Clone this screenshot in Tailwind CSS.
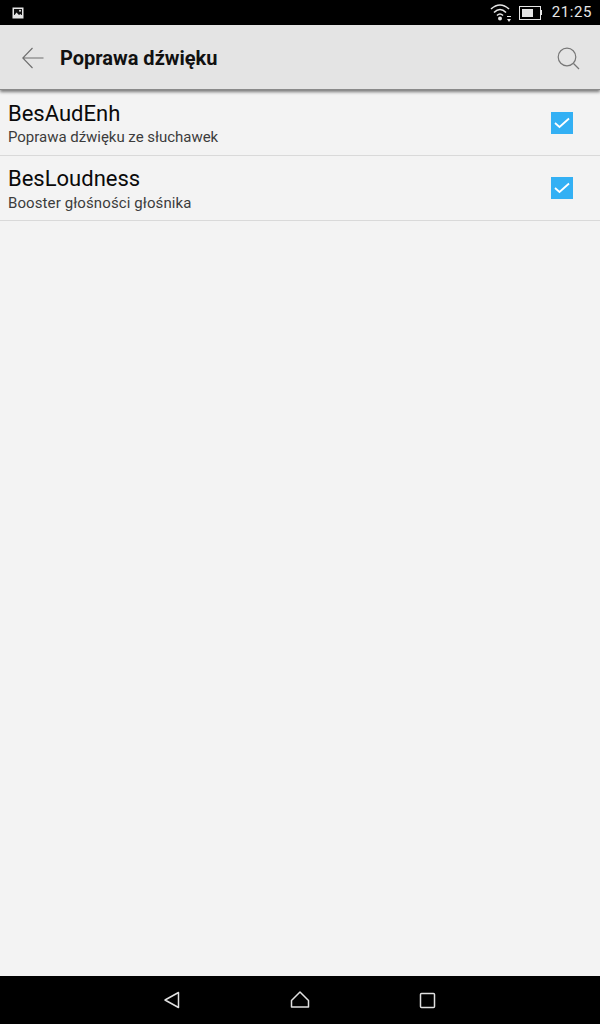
<!DOCTYPE html>
<html lang="pl">
  <head>
    <meta charset="UTF-8" />
    <meta name="viewport" content="width=device-width, initial-scale=1.0" />
    <title>Poprawa dźwięku</title>
    <script src="https://cdn.jsdelivr.net/npm/@tailwindcss/browser@4"></script>
  </head>
  <body class="bg-[#f3f3f3] font-['Roboto',sans-serif]">
    <div class="flex flex-col w-[600px] h-[1024px] overflow-hidden">
      <!-- Status bar -->
      <div class="flex items-center h-[25px] bg-black text-[#e6e6e6] shrink-0">
        <svg class="ml-3 w-3 h-3" viewBox="0 0 12 12">
          <rect x="0.5" y="0.5" width="11" height="11" fill="#e6e6e6" />
          <rect x="2" y="2" width="8" height="6" fill="#111" />
          <path d="M1 10 L4.5 5.5 L7 8 L8.5 7 L11 10 Z" fill="#e6e6e6" />
          <circle cx="8" cy="3.8" r="1" fill="#e6e6e6" />
        </svg>
        <div class="ml-auto flex items-center">
          <svg class="w-[22px] h-[20px]" viewBox="0 0 22 20" fill="none" stroke="#e6e6e6" stroke-width="1.6">
            <path d="M1 6 Q10 -2 19 6" />
            <path d="M4 9.5 Q10 3.5 16 9.5" />
            <path d="M7 12.5 Q10 9.5 13 12.5" />
            <circle cx="10" cy="15.5" r="2" fill="#e6e6e6" stroke="none" />
            <path d="M17 13h4v1h-4z M17 16h4l-2 3z" fill="#e6e6e6" stroke="none" />
          </svg>
          <div class="ml-[7px] flex items-center">
            <div class="w-[22px] h-[14px] border border-[#e6e6e6] p-[2px]">
              <div class="w-[11px] h-full bg-[#e6e6e6]"></div>
            </div>
            <div class="w-px h-[5px] bg-[#e6e6e6]"></div>
          </div>
          <span class="ml-[10px] mr-[8px] text-[15px] leading-none tracking-[0.6px]">21:25</span>
        </div>
      </div>

      <!-- Action bar -->
      <div class="flex items-center h-[65px] pt-[2px] bg-[#e4e4e4] shadow-[0_2px_3px_rgba(0,0,0,0.5)] border-b border-[#8a8a8a] shrink-0 relative z-10">
        <svg class="ml-[22px] w-[22px] h-[22px]" viewBox="0 0 22 22" fill="none" stroke="#6e6e6e" stroke-width="1.1">
          <path d="M0.8 11 H21.5 M10.5 1 L0.8 11 L10.5 21" />
        </svg>
        <h1 class="ml-[16px] text-[20px] font-bold text-[#111]">Poprawa dźwięku</h1>
        <svg class="ml-auto mr-[20px] w-[23px] h-[23px]" viewBox="0 0 23 23" fill="none" stroke="#777" stroke-width="1.2">
          <circle cx="10" cy="10" r="8.8" />
          <path d="M16.5 16.5 L22 22" />
        </svg>
      </div>

      <!-- List -->
      <div class="flex items-center h-[66px] pl-2 border-b border-[#d9d9d9]">
        <div class="flex-1 pt-[3px]">
          <div class="text-[22px] leading-[26px] text-[#0a0a0a]">BesAudEnh</div>
          <div class="text-[15px] leading-[20px] tracking-[-0.03px] text-[#3c3c3c]">Poprawa dźwięku ze słuchawek</div>
        </div>
        <div class="flex items-center justify-center w-[22px] h-[22px] mr-[27px] bg-[#33b0f4]">
          <svg class="w-[16px] h-[12px]" viewBox="0 0 16 12" fill="none" stroke="#fff" stroke-width="1.8">
            <path d="M1 6 L5.5 10 L15 1.5" />
          </svg>
        </div>
      </div>
      <div class="flex items-center h-[65px] pl-2 border-b border-[#d9d9d9]">
        <div class="flex-1 pt-[2px]">
          <div class="text-[22px] leading-[26px] text-[#0a0a0a]">BesLoudness</div>
          <div class="mt-px text-[15px] leading-[20px] tracking-[0.1px] text-[#3c3c3c]">Booster głośności głośnika</div>
        </div>
        <div class="flex items-center justify-center w-[22px] h-[22px] mr-[27px] bg-[#33b0f4]">
          <svg class="w-[16px] h-[12px]" viewBox="0 0 16 12" fill="none" stroke="#fff" stroke-width="1.8">
            <path d="M1 6 L5.5 10 L15 1.5" />
          </svg>
        </div>
      </div>

      <div class="flex-1"></div>

      <!-- Navigation bar -->
      <div class="flex items-center h-[48px] bg-black shrink-0 relative">
        <svg class="ml-[163px] w-[18px] h-[18px]" viewBox="0 0 18 18" fill="none" stroke="#e0e0e0" stroke-width="1.5" stroke-linejoin="round">
          <path d="M2 9 L15.5 1.5 V16.5 Z" />
        </svg>
        <svg class="ml-[109px] w-[20px] h-[18px]" viewBox="0 0 20 18" fill="none" stroke="#e0e0e0" stroke-width="1.5" stroke-linejoin="round">
          <path d="M1.5 9.5 L10 1 L18.5 9.5 V16 H1.5 Z" />
        </svg>
        <svg class="ml-[109px] w-[17px] h-[17px]" viewBox="0 0 17 17" fill="none" stroke="#e0e0e0" stroke-width="1.5" stroke-linejoin="round">
          <rect x="1.5" y="1.5" width="14" height="14" rx="1" />
        </svg>
      </div>
    </div>
  </body>
</html>
